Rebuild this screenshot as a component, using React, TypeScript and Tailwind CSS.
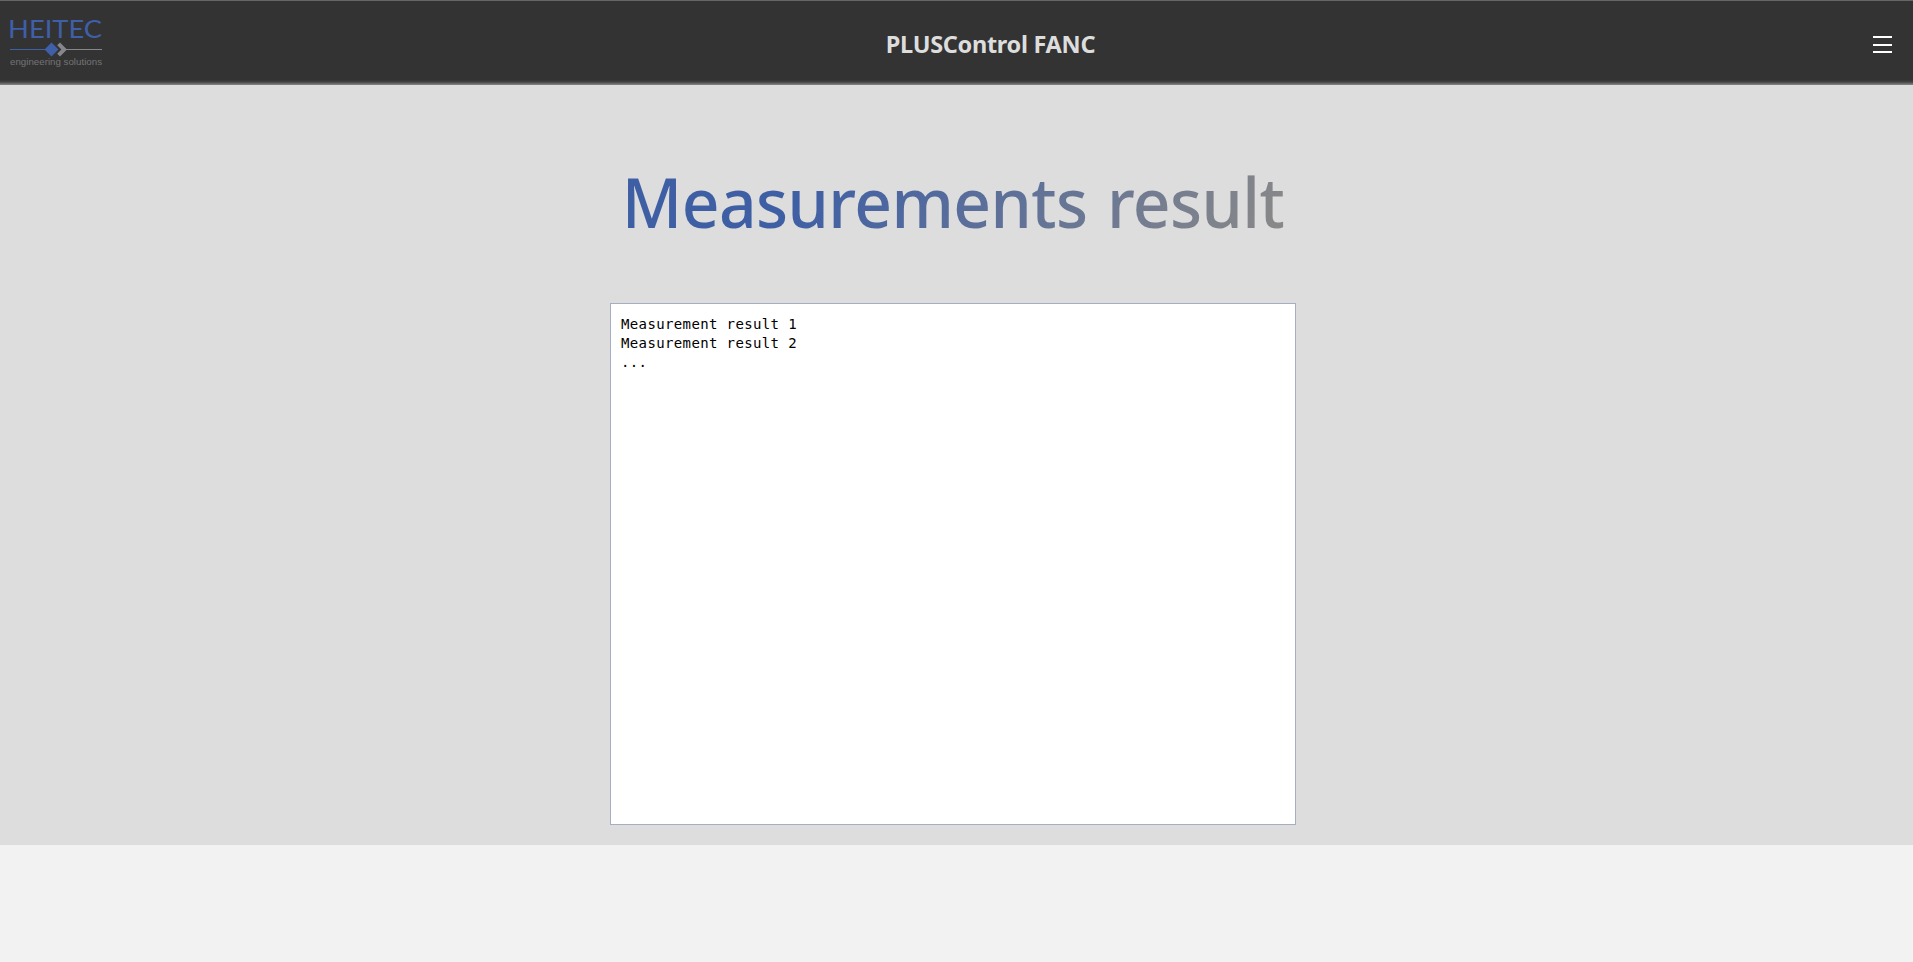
const results = ["Measurement result 1", "Measurement result 2", "..."];

function Logo() {
  return (
    <svg width="120" height="83" viewBox="0 0 120 83" className="block" aria-label="HEITEC engineering solutions">
      <text x="8.1" y="36.7" textLength="94" lengthAdjust="spacingAndGlyphs" fontSize="25.7" fill="#3f5fa8" fontFamily="Lato, sans-serif">
        HEITEC
      </text>
      <path d="M10 48.5H46" stroke="#3f5fa8" strokeWidth="1" />
      <path d="M66 48.5H102" stroke="#87878b" strokeWidth="1" />
      <path d="M51.5 41.5L58.5 48.5L51.5 55.5L44.5 48.5Z" fill="#3f5fa8" />
      <path d="M57.2 44.3L60 41.5L67 48.5L60 55.5L57.2 52.7L61.4 48.5Z" fill="#87878b" />
      <text x="10" y="64" textLength="92" lengthAdjust="spacingAndGlyphs" fontSize="8.7" fill="#737376" fontFamily="Liberation Sans, sans-serif">
        engineering solutions
      </text>
    </svg>
  );
}

export default function App() {
  return (
    <div className="flex min-h-[962px] flex-col bg-[#f2f2f2] font-['Noto_Sans',sans-serif]">
      <header className="grid h-[85px] grid-cols-[1fr_auto_1fr] border-t border-[#666] bg-[linear-gradient(#333_79px,#444_81px,#888_84px)]">
        <Logo />
        <h1 className="translate-x-[34px] pt-[27px] text-[23.5px] leading-8 font-bold tracking-[-0.3px] text-[#ddd]">PLUSControl FANC</h1>
        <button aria-label="Menu" className="mt-[35px] mr-[21px] flex h-[17px] w-[19px] flex-col justify-between justify-self-end">
          <span className="h-[2px] w-full bg-white" />
          <span className="h-[2px] w-full bg-white" />
          <span className="h-[2px] w-full bg-white" />
        </button>
      </header>
      <main className="flex h-[760px] flex-col items-center bg-[#ddd] pr-[7px]">
        <h2 className="mt-[61px] h-[157px] w-[724px] scale-x-[0.955] bg-[linear-gradient(120deg,#3f5fa5_28%,#888_92%)] bg-clip-text text-center text-[69px] leading-[110px] font-medium tracking-[-0.6px] [word-spacing:3px] whitespace-nowrap text-transparent">
          Measurements result
        </h2>
        <div className="h-[522px] w-[686px] border border-[#a5afc2] bg-white px-[10px] pt-[11px] font-['DejaVu_Sans_Mono',monospace] text-[14px] leading-[19px] tracking-[0.37px] text-black">
          {results.map((line) => (
            <p key={line}>{line}</p>
          ))}
        </div>
      </main>
    </div>
  );
}
